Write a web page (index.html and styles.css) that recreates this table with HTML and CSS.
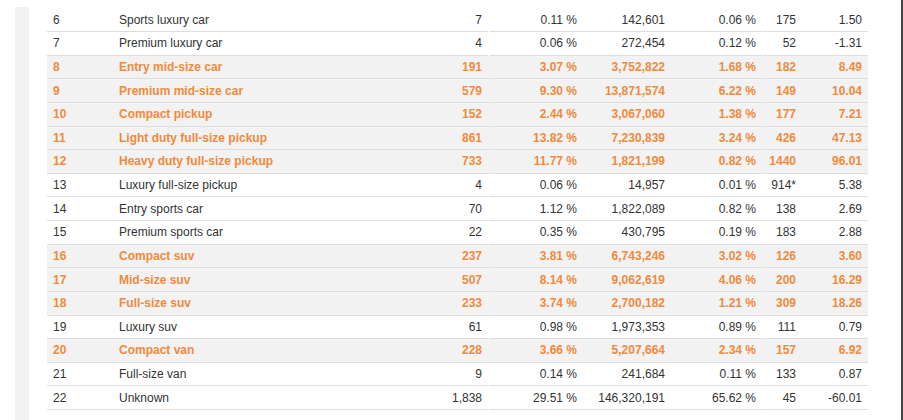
FILE: index.html
```html
<!DOCTYPE html>
<html>
<head>
<meta charset="utf-8">
<link rel="stylesheet" href="styles.css">
</head>
<body>
<div class="page">
  <div class="rail"></div>
  <div class="table">
    <div class="row"><div class="cell">6</div><div class="cell">Sports luxury car</div><div class="cell r">7</div><div class="cell r gap">0.11 %</div><div class="cell r">142,601</div><div class="cell r">0.06 %</div><div class="cell r gap">175</div><div class="cell r">1.50</div></div>
    <div class="row"><div class="cell">7</div><div class="cell">Premium luxury car</div><div class="cell r">4</div><div class="cell r gap">0.06 %</div><div class="cell r">272,454</div><div class="cell r">0.12 %</div><div class="cell r gap">52</div><div class="cell r">-1.31</div></div>
    <div class="row hl"><div class="cell">8</div><div class="cell">Entry mid-size car</div><div class="cell r">191</div><div class="cell r gap">3.07 %</div><div class="cell r">3,752,822</div><div class="cell r">1.68 %</div><div class="cell r gap">182</div><div class="cell r">8.49</div></div>
    <div class="row hl"><div class="cell">9</div><div class="cell">Premium mid-size car</div><div class="cell r">579</div><div class="cell r gap">9.30 %</div><div class="cell r">13,871,574</div><div class="cell r">6.22 %</div><div class="cell r gap">149</div><div class="cell r">10.04</div></div>
    <div class="row hl"><div class="cell">10</div><div class="cell">Compact pickup</div><div class="cell r">152</div><div class="cell r gap">2.44 %</div><div class="cell r">3,067,060</div><div class="cell r">1.38 %</div><div class="cell r gap">177</div><div class="cell r">7.21</div></div>
    <div class="row hl"><div class="cell">11</div><div class="cell">Light duty full-size pickup</div><div class="cell r">861</div><div class="cell r gap">13.82 %</div><div class="cell r">7,230,839</div><div class="cell r">3.24 %</div><div class="cell r gap">426</div><div class="cell r">47.13</div></div>
    <div class="row hl"><div class="cell">12</div><div class="cell">Heavy duty full-size pickup</div><div class="cell r">733</div><div class="cell r gap">11.77 %</div><div class="cell r">1,821,199</div><div class="cell r">0.82 %</div><div class="cell r gap">1440</div><div class="cell r">96.01</div></div>
    <div class="row"><div class="cell">13</div><div class="cell">Luxury full-size pickup</div><div class="cell r">4</div><div class="cell r gap">0.06 %</div><div class="cell r">14,957</div><div class="cell r">0.01 %</div><div class="cell r gap">914*</div><div class="cell r">5.38</div></div>
    <div class="row"><div class="cell">14</div><div class="cell">Entry sports car</div><div class="cell r">70</div><div class="cell r gap">1.12 %</div><div class="cell r">1,822,089</div><div class="cell r">0.82 %</div><div class="cell r gap">138</div><div class="cell r">2.69</div></div>
    <div class="row"><div class="cell">15</div><div class="cell">Premium sports car</div><div class="cell r">22</div><div class="cell r gap">0.35 %</div><div class="cell r">430,795</div><div class="cell r">0.19 %</div><div class="cell r gap">183</div><div class="cell r">2.88</div></div>
    <div class="row hl"><div class="cell">16</div><div class="cell">Compact suv</div><div class="cell r">237</div><div class="cell r gap">3.81 %</div><div class="cell r">6,743,246</div><div class="cell r">3.02 %</div><div class="cell r gap">126</div><div class="cell r">3.60</div></div>
    <div class="row hl"><div class="cell">17</div><div class="cell">Mid-size suv</div><div class="cell r">507</div><div class="cell r gap">8.14 %</div><div class="cell r">9,062,619</div><div class="cell r">4.06 %</div><div class="cell r gap">200</div><div class="cell r">16.29</div></div>
    <div class="row hl"><div class="cell">18</div><div class="cell">Full-size suv</div><div class="cell r">233</div><div class="cell r gap">3.74 %</div><div class="cell r">2,700,182</div><div class="cell r">1.21 %</div><div class="cell r gap">309</div><div class="cell r">18.26</div></div>
    <div class="row"><div class="cell">19</div><div class="cell">Luxury suv</div><div class="cell r">61</div><div class="cell r gap">0.98 %</div><div class="cell r">1,973,353</div><div class="cell r">0.89 %</div><div class="cell r gap">111</div><div class="cell r">0.79</div></div>
    <div class="row hl"><div class="cell">20</div><div class="cell">Compact van</div><div class="cell r">228</div><div class="cell r gap">3.66 %</div><div class="cell r">5,207,664</div><div class="cell r">2.34 %</div><div class="cell r gap">157</div><div class="cell r">6.92</div></div>
    <div class="row"><div class="cell">21</div><div class="cell">Full-size van</div><div class="cell r">9</div><div class="cell r gap">0.14 %</div><div class="cell r">241,684</div><div class="cell r">0.11 %</div><div class="cell r gap">133</div><div class="cell r">0.87</div></div>
    <div class="row"><div class="cell">22</div><div class="cell">Unknown</div><div class="cell r">1,838</div><div class="cell r gap">29.51 %</div><div class="cell r">146,320,191</div><div class="cell r">65.62 %</div><div class="cell r gap">45</div><div class="cell r">-60.01</div></div>
  </div>
  <div class="edge"></div>
</div>
</body>
</html>
```
FILE: styles.css
```css
html, body {
  margin: 0;
  padding: 0;
  background: #ffffff;
}

.page {
  display: flex;
  height: 420px;
  overflow: hidden;
  font-family: "Liberation Sans", Arial, sans-serif;
  font-size: 12px;
  color: #333333;
}

.rail {
  width: 14px;
  margin: 7px 0 0 15px;
  background: #f2f2f2;
}

.table {
  width: 821px;
  margin: 8.4px 0 0 18px;
  align-self: flex-start;
}

.row {
  display: grid;
  grid-template-columns: 66px 300px 75px 95px 88px 91px 40px 66px;
  height: 23.625px;
  background: #ffffff;
}

.row.hl {
  background: #f2f2f2;
  color: #f08a3c;
  font-weight: bold;
}

.cell {
  display: flex;
  align-items: center;
  padding: 0 6px;
  border-bottom: 1px solid #dddddd;
  white-space: nowrap;
  min-width: 0;
}

.cell.r {
  justify-content: flex-end;
}

.cell.gap {
  margin-left: 1px;
}

.edge {
  width: 2px;
  margin-left: auto;
  background: #474747;
}
```
